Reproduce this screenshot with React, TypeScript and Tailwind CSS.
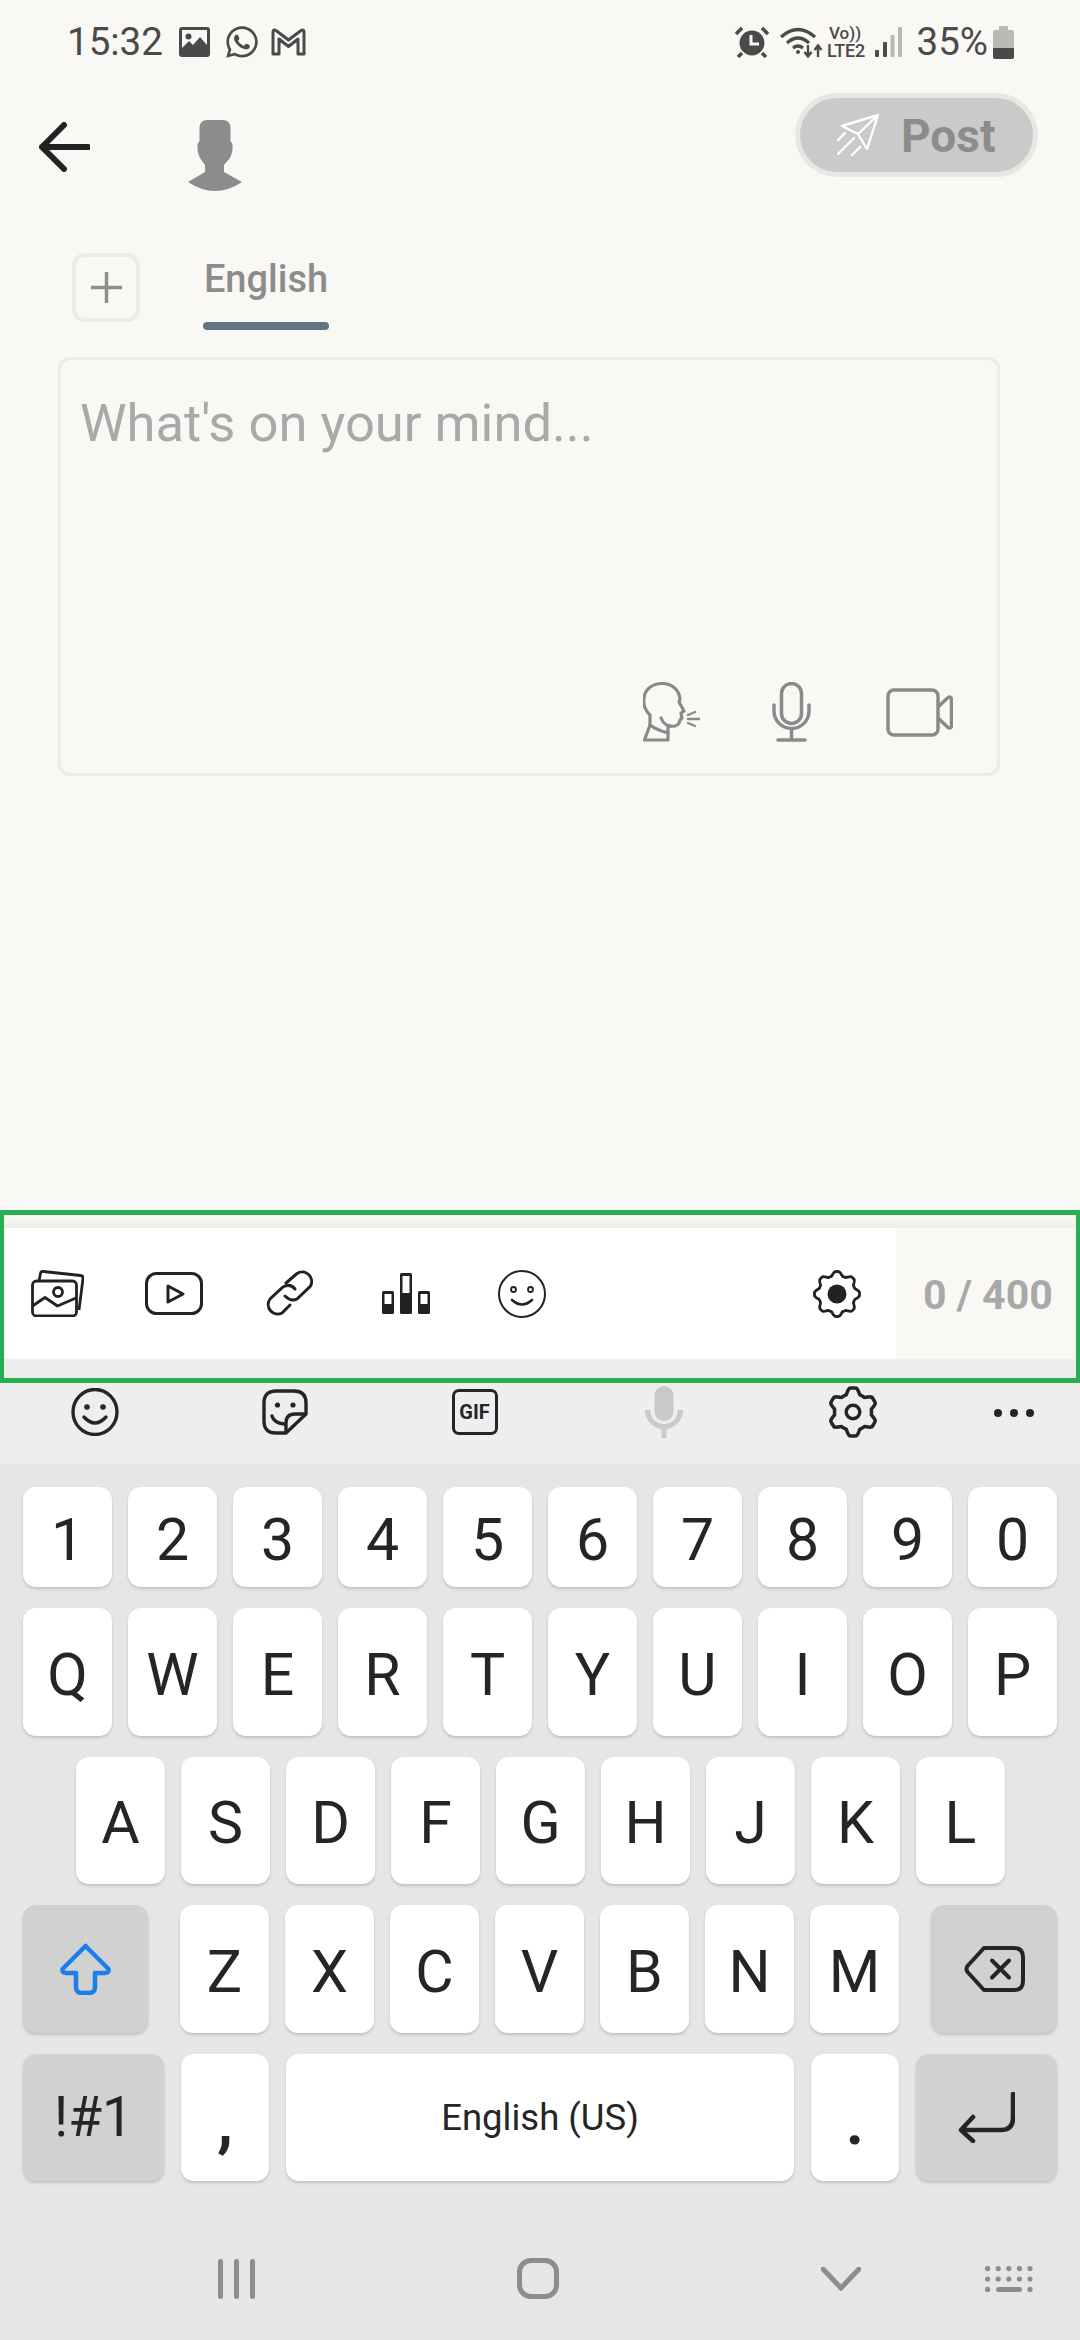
import { FaWhatsapp } from "react-icons/fa"

// lobed outline used by both settings cogs
const cogPath = (cx: number, cy: number, teeth: number, inner: number, outer: number, sharp: number) => {
  const pts: string[] = []
  for (let i = 0; i < 240; i++) {
    const a = (i / 240) * Math.PI * 2 - Math.PI / 2
    const w = Math.max(-1, Math.min(1, Math.cos(a * teeth + (Math.PI / 2) * teeth) * sharp))
    const r = (inner + outer) / 2 + ((outer - inner) / 2) * w
    pts.push(`${(cx + r * Math.cos(a)).toFixed(2)} ${(cy + r * Math.sin(a)).toFixed(2)}`)
  }
  return `M${pts.join("L")}Z`
}

const Key = ({ label, className = "w-[89px]" }: { label: string; className?: string }) => (
  <div className={`${className} flex items-center justify-center pt-1 rounded-[13px] bg-white text-[59px] leading-none text-[#252525] shadow-[0_2px_3px_rgba(0,0,0,0.16)]`}>
    {label}
  </div>
)

const FnKey = ({ className, children }: { className: string; children: React.ReactNode }) => (
  <div className={`${className} flex items-center justify-center rounded-[13px] bg-[#d1d1d1] text-[#252525] shadow-[0_2px_3px_rgba(0,0,0,0.16)]`}>
    {children}
  </div>
)

const StatusBar = () => (
  <div className="h-[84px] shrink-0 flex items-center justify-between pl-[67px] pr-[66px] text-[#4a4a4a]">
    <div className="flex items-center">
      <span className="text-[38.5px] leading-none pt-[1px]">15:32</span>
      <svg className="ml-[16px]" width="31" height="30" viewBox="0 0 31 30">
        <rect width="31" height="30" rx="3" fill="#4a4a4a" />
        <rect x="3" y="3" width="25" height="22" fill="#f9f8f4" />
        <circle cx="9.5" cy="9.5" r="3" fill="#4a4a4a" />
        <path d="M3 21 L10 14 L14 18 L21 10 L28 18 V26 H3 Z" fill="#4a4a4a" />
      </svg>
      <FaWhatsapp className="ml-[14px]" size={36} color="#4a4a4a" />
      <svg className="ml-[11px]" width="35" height="28" viewBox="0 0 35 28" fill="none" stroke="#4a4a4a" strokeWidth="3" strokeLinejoin="round">
        <path d="M2 26 V4 Q2 1 5 2.5 L17.5 12 L30 2.5 Q33 1 33 4 V26 H27 V11 L17.5 18.5 L8 11 V26 Z" />
      </svg>
    </div>
    <div className="flex items-center">
      <svg width="34" height="32" viewBox="0 0 34 32" fill="#4a4a4a">
        <circle cx="17" cy="17" r="12.5" />
        <path d="M16 9 V18 H24" fill="none" stroke="#f9f8f4" strokeWidth="3" />
        <path d="M1 8 L7 2 M33 8 L27 2 M3 31 L7 27 M31 31 L27 27" stroke="#4a4a4a" strokeWidth="3.5" fill="none" />
      </svg>
      <svg className="ml-[11px]" width="43" height="32" viewBox="0 0 43 32" fill="none" stroke="#4a4a4a" strokeWidth="3.2">
        <path d="M1 11 Q18 -4 35 11" />
        <path d="M7 17 Q18 7 29 17" />
        <path d="M13 22 Q18 18 23 22" />
        <circle cx="18" cy="26" r="2" fill="#4a4a4a" stroke="none" />
        <path d="M28 19 V30 M24.5 26 L28 30.5 L31.5 26 M38 31 V20 M34.5 24 L38 19.5 L41.5 24" strokeWidth="2.4" />
      </svg>
      <div className="ml-[3px] w-[41px] h-[32px] flex flex-col items-center justify-between font-medium leading-none">
        <span className="text-[17px] leading-[15px] pr-[2px]">Vo))</span>
        <span className="text-[18px] leading-[15px] tracking-[-0.2px]">LTE2</span>
      </div>
      <svg className="ml-[8px]" width="27" height="30" viewBox="0 0 27 30">
        <rect x="0" y="23" width="4" height="7" rx="1" fill="#4a4a4a" />
        <rect x="8" y="15" width="4" height="15" rx="1" fill="#4a4a4a" />
        <rect x="15.5" y="8" width="4" height="22" rx="1" fill="#b9b8b3" />
        <rect x="23" y="0" width="4" height="30" rx="1" fill="#b9b8b3" />
      </svg>
      <span className="ml-[15px] text-[38.5px] leading-none pt-[1px]">35%</span>
      <svg className="ml-[5px]" width="21" height="33" viewBox="0 0 21 33">
        <path d="M6 0 H15 V4 H19 Q21 4 21 6 V22 H0 V6 Q0 4 2 4 H6 Z" fill="#bab9b4" />
        <path d="M0 22 H21 V31 Q21 33 19 33 H2 Q0 33 0 31 Z" fill="#4a4a4a" />
      </svg>
    </div>
  </div>
)

const Header = () => (
  <div className="h-[131px] shrink-0 flex items-start pl-[39px] pr-[42px]">
    <svg className="mt-[38px]" width="51" height="50" viewBox="0 0 51 50" fill="none" stroke="#222" strokeWidth="6" strokeLinecap="round" strokeLinejoin="round">
      <path d="M49 25 H3 M25 3 L3 25 L25 47" />
    </svg>
    <svg className="ml-[98px] mt-[36px]" width="54" height="71" viewBox="0 0 54 71" fill="#8c8c8c">
      <path d="M19 0 H35 Q42 0 42.5 8 V21 L44.5 24 V30 Q43.5 35 42 38 L36 45 V52 L54 62 Q27 80 0 62 L17 52 V45 L12 38 Q10.5 35 9.5 30 V24 L11.5 21 V8 Q12 0 19 0 Z" />
    </svg>
    <div className="ml-auto mt-[9px] w-[243px] h-[84px] flex items-center rounded-full border-[5px] border-[#e8e8e3] bg-[#cacaca] pl-[37px]">
      <svg width="42" height="42" viewBox="0 0 42 42" fill="none" stroke="#fff" strokeWidth="2.4" strokeLinecap="round" strokeLinejoin="round">
        <path d="M41 1 L5 12 L21 20 L30 35 Z M21 20 L41 1" />
        <path d="M1 26 L8 19 M1 40 L17 24 M15 41 L23 33" />
      </svg>
      <span className="ml-[22px] pt-[2px] text-[46px] leading-none font-bold text-[#8c8c8c]">Post</span>
    </div>
  </div>
)

const Tabs = () => (
  <div className="h-[142px] shrink-0 flex items-start pl-[72px]">
    <div className="mt-[38px] w-[68px] h-[69px] flex items-center justify-center rounded-[13px] border-[4px] border-[#ebebe7]">
      <svg width="31" height="31" viewBox="0 0 31 31" stroke="#8e8e8e" strokeWidth="3.5">
        <path d="M15.5 0 V31 M0 15.5 H31" />
      </svg>
    </div>
    <div className="ml-[63px] mt-[38px] w-[126px] h-[77px] flex flex-col justify-between items-center">
      <span className="text-[38px] leading-[52px] font-medium text-[#8c8c8c]">English</span>
      <div className="w-full h-[8px] rounded-full bg-[#5f7582]" />
    </div>
  </div>
)

const Composer = () => (
  <div className="ml-[58px] w-[942px] h-[419px] shrink-0 flex flex-col justify-between rounded-[12px] border-[3px] border-[#ebebe7] pl-[19px] pr-[44px] pt-[32px] pb-[31px]">
    <div className="text-[52.5px] leading-[62px] text-[#a9a9a9]">What's on your mind...</div>
    <div className="flex items-center justify-end">
      <svg width="57" height="60" viewBox="0 0 57 60" fill="none" stroke="#8a8a8a" strokeWidth="3.2" strokeLinecap="round" strokeLinejoin="round">
        <path d="M1.5 58 L7 43 V33 C2 28 0 22 1 16 C2 6 11 1.5 19 1.5 C28 1.5 36 7 37 17 L36 20 L41 29 L38 31 L39 36 L37 38 C36 44 32 45 25 44 V58 Z" />
        <path d="M18 36 C20 41 24 44 28 44 M7 43 C12 47 18 49 25 51" />
        <path d="M45 33 L52 30 M45 37 L57 37 M45 41 L52 44" strokeWidth="2.4" />
      </svg>
      <svg className="ml-[72px]" width="39" height="60" viewBox="0 0 39 60" fill="none" stroke="#8a8a8a" strokeWidth="3.5" strokeLinecap="round">
        <rect x="9.5" y="1.5" width="20" height="40" rx="10" />
        <path d="M2 23 V29 A17.5 17.5 0 0 0 37 29 V23 M19.5 47 V58 M6 58 H33" />
      </svg>
      <svg className="ml-[75px]" width="67" height="49" viewBox="0 0 67 49" fill="none" stroke="#8a8a8a" strokeWidth="3.5" strokeLinejoin="round">
        <rect x="2" y="2" width="50" height="45" rx="6" />
        <path d="M52 19 L62 9.5 Q65.5 8 65.5 12 V37 Q65.5 41 62 39.5 L52 30" />
      </svg>
    </div>
  </div>
)

const MediaToolbar = () => (
  <div className="shrink-0">
    <div className="h-[13px] bg-gradient-to-b from-[#f9f8f4] to-[#eeeeea]" />
    <div className="h-[131px] flex">
      <div className="w-[896px] bg-white flex items-center pl-[31px] text-[#222]">
        <svg width="53" height="47" viewBox="0 0 53 47" fill="none" stroke="#222" strokeWidth="2.8" strokeLinejoin="round">
          <path d="M8 11 L9.5 3.5 Q10 1 12.5 1.5 L49.5 5.5 Q52.5 6 52 8.5 L48 40" />
          <rect x="1.5" y="11" width="44" height="35" rx="4" />
          <circle cx="27" cy="22" r="4.5" />
          <path d="M1.5 36 L14 27.5 L26.5 36 L45 28" />
        </svg>
        <svg className="ml-[61px]" width="58" height="43" viewBox="0 0 58 43" fill="none" stroke="#222" strokeWidth="3" strokeLinejoin="round">
          <rect x="1.5" y="1.5" width="55" height="40" rx="10" />
          <path d="M23 14 L38 22 L23 30 Z" />
        </svg>
        <svg className="ml-[63px]" width="47" height="47" viewBox="0 0 47 47" fill="none" stroke="#222" strokeWidth="3" strokeLinecap="round">
          <path d="M20 13 L31 3.5 A9.5 9.5 0 0 1 44.5 16 L31 29 Q25 32 19 26" />
          <path d="M29 19 Q24 13 17 17 L4 29 A9.5 9.5 0 0 0 16 43 L24 35" />
        </svg>
        <svg className="ml-[69px]" width="48" height="41" viewBox="0 0 48 41">
          <rect x="0" y="18" width="12" height="23" rx="1.5" fill="#222" />
          <rect x="2.5" y="21" width="7" height="10" fill="#fff" />
          <rect x="18" y="0" width="12" height="41" rx="1.5" fill="#222" />
          <rect x="20.5" y="3" width="7" height="17" fill="#fff" />
          <rect x="36" y="18" width="12" height="23" rx="1.5" fill="#222" />
          <rect x="38.5" y="21" width="7" height="10" fill="#fff" />
        </svg>
        <svg className="ml-[68px]" width="48" height="48" viewBox="0 0 48 48" fill="none" stroke="#222">
          <ellipse cx="24" cy="24" rx="23" ry="23" strokeWidth="2" />
          <circle cx="15.5" cy="19.5" r="2.5" strokeWidth="1.8" />
          <circle cx="32.5" cy="19.5" r="2.5" strokeWidth="1.8" />
          <path d="M14 30 Q24 39 34 30" strokeWidth="2.6" strokeLinecap="round" />
        </svg>
        <svg className="ml-[267px]" width="48" height="48" viewBox="0 0 48 48">
          <path d={cogPath(24, 24, 8, 18.5, 22.5, 1.3)} fill="none" stroke="#222" strokeWidth="2.8" />
          <circle cx="24" cy="24" r="9.5" fill="#222" />
        </svg>
      </div>
      <div className="flex-1 flex items-center pl-[27px] pt-[4px] text-[41px] leading-none font-bold text-[#a8a8a8]">0 / 400</div>
    </div>
  </div>
)

const KeyboardToolbar = () => (
  <div className="h-[105px] shrink-0 flex items-center bg-[#eeeeee]">
    <div className="w-[190px] flex justify-center">
      <svg width="48" height="48" viewBox="0 0 48 48" fill="none" stroke="#252525" strokeWidth="3.4">
        <ellipse cx="24" cy="24" rx="22" ry="22.5" />
        <circle cx="16" cy="19" r="2.8" fill="#252525" stroke="none" />
        <circle cx="32" cy="19" r="2.8" fill="#252525" stroke="none" />
        <path d="M13 29 Q24 41 35 29" strokeLinecap="round" />
      </svg>
    </div>
    <div className="w-[190px] flex justify-center">
      <svg width="46" height="46" viewBox="0 0 46 46" fill="none" stroke="#252525" strokeWidth="3.4" strokeLinejoin="round">
        <path d="M24 44 H14 Q2 44 2 32 V14 Q2 2 14 2 H32 Q44 2 44 14 V25 L24 44 Z" />
        <path d="M44 25 H33 Q24 25 24 34 V44" />
        <path d="M10 27 Q12 34 22 35" strokeLinecap="round" />
        <circle cx="15.5" cy="16" r="2.6" fill="#252525" stroke="none" />
        <circle cx="31" cy="16" r="2.6" fill="#252525" stroke="none" />
      </svg>
    </div>
    <div className="w-[189px] flex justify-center">
      <div className="w-[46px] h-[46px] flex items-center justify-center rounded-[7px] border-[3.5px] border-[#252525] text-[20px] leading-none font-bold text-[#252525]">GIF</div>
    </div>
    <div className="w-[189px] flex justify-center">
      <svg width="38" height="52" viewBox="0 0 38 52" fill="none" stroke="#c9c9c9" strokeWidth="5">
        <rect x="9.5" y="0" width="19" height="35" rx="9.5" fill="#c9c9c9" stroke="none" />
        <path d="M2.5 24 A16.5 16.5 0 0 0 35.5 24 M19 40 V52" />
      </svg>
    </div>
    <div className="w-[190px] flex justify-center">
      <svg width="50" height="52" viewBox="0 0 50 52">
        <path d={cogPath(25, 26, 6, 18.5, 24, 1.6)} fill="none" stroke="#252525" strokeWidth="3.5" strokeLinejoin="round" />
        <circle cx="25" cy="26" r="6.8" fill="none" stroke="#252525" strokeWidth="3.4" />
      </svg>
    </div>
    <div className="flex-1 flex justify-center gap-[8px] pt-[3px]">
      <div className="w-[8px] h-[8px] rounded-full bg-[#252525]" />
      <div className="w-[8px] h-[8px] rounded-full bg-[#252525]" />
      <div className="w-[8px] h-[8px] rounded-full bg-[#252525]" />
    </div>
  </div>
)

const Keyboard = () => (
  <div className="h-[876px] shrink-0 flex flex-col gap-[21px] bg-[#e6e6e6] pt-[23px]">
    <div className="h-[100px] flex gap-[16px] pl-[23px]">
      {"1234567890".split("").map((k) => <Key key={k} label={k} />)}
    </div>
    <div className="h-[128px] flex gap-[16px] pl-[23px]">
      {"QWERTYUIOP".split("").map((k) => <Key key={k} label={k} />)}
    </div>
    <div className="h-[127px] flex gap-[16px] pl-[76px]">
      {"ASDFGHJKL".split("").map((k) => <Key key={k} label={k} />)}
    </div>
    <div className="h-[128px] flex gap-[16px] pl-[23px]">
      <FnKey className="w-[125px] mr-[16px]">
        <svg width="51" height="52" viewBox="0 0 51 52" fill="none" stroke="#1a7fea" strokeWidth="4.5" strokeLinejoin="round">
          <path d="M25.5 3 L48.5 26 Q49 30 45 30 H35 V44 Q35 50 29 50 H22 Q16 50 16 44 V30 H6 Q2 30 2.5 26 Z" />
        </svg>
      </FnKey>
      {"ZXCVBNM".split("").map((k) => <Key key={k} label={k} />)}
      <FnKey className="w-[126px] ml-[16px]">
        <svg width="61" height="46" viewBox="0 0 61 46" fill="none" stroke="#252525" strokeWidth="4" strokeLinejoin="round" strokeLinecap="round">
          <path d="M20 2 H50 Q59 2 59 11 V35 Q59 44 50 44 H20 L3.5 26 Q1.5 23 3.5 20 Z" />
          <path d="M28 14.5 L45 31.5 M45 14.5 L28 31.5" />
        </svg>
      </FnKey>
    </div>
    <div className="h-[127px] flex gap-[17px] pl-[23px]">
      <FnKey className="w-[141px] text-[55px] leading-none">!#1</FnKey>
      <div className="w-[88px] flex justify-center rounded-[13px] bg-white text-[72px] leading-none font-medium text-[#252525] shadow-[0_2px_3px_rgba(0,0,0,0.16)] pt-[30px]">,</div>
      <div className="w-[508px] flex items-center justify-center pt-[2px] rounded-[13px] bg-white text-[36.5px] leading-none text-[#252525] shadow-[0_2px_3px_rgba(0,0,0,0.16)]">English (US)</div>
      <div className="w-[88px] flex justify-center rounded-[13px] bg-white text-[72px] leading-none font-medium text-[#252525] shadow-[0_2px_3px_rgba(0,0,0,0.16)] pt-[30px]">.</div>
      <FnKey className="w-[141px]">
        <svg width="57" height="51" viewBox="0 0 57 51" fill="none" stroke="#252525" strokeWidth="4.5" strokeLinecap="round" strokeLinejoin="round">
          <path d="M55 2 V26 Q55 38 43 38 H3 M15 25 L3 38 L15 49" />
        </svg>
      </FnKey>
    </div>
    <div className="h-[41px] mt-[56px] flex items-center pl-[218px] text-[#8d8d8d]">
      <div className="flex gap-[11px]">
        <div className="w-[5px] h-[40px] rounded-full bg-[#8d8d8d]" />
        <div className="w-[5px] h-[40px] rounded-full bg-[#8d8d8d]" />
        <div className="w-[5px] h-[40px] rounded-full bg-[#8d8d8d]" />
      </div>
      <div className="ml-[262px] w-[42px] h-[41px] rounded-[14px] border-[5px] border-[#8d8d8d]" />
      <svg className="ml-[262px]" width="40" height="24" viewBox="0 0 40 24" fill="none" stroke="#8d8d8d" strokeWidth="5" strokeLinecap="round">
        <path d="M2 2 L20 21 L38 2" />
      </svg>
      <svg className="ml-[124px]" width="48" height="26" viewBox="0 0 48 26" fill="#8d8d8d">
        {[0, 1].map((r) =>
          [0, 1, 2, 3, 4].map((c) => <circle key={`${r}-${c}`} cx={2.6 + c * 10.6} cy={2.6 + r * 10.4} r="2.6" />)
        )}
        <circle cx="2.6" cy="23.4" r="2.6" />
        <rect x="11" y="21" width="26" height="5" rx="2.5" />
        <circle cx="45" cy="23.4" r="2.6" />
      </svg>
    </div>
  </div>
)

export default function App() {
  return (
    <div className="relative w-[1080px] h-[2340px] overflow-hidden flex flex-col bg-[#f9f8f4] font-[Roboto,sans-serif]">
      <StatusBar />
      <Header />
      <Tabs />
      <Composer />
      <div className="flex-1" />
      <MediaToolbar />
      <KeyboardToolbar />
      <Keyboard />
      {/* green annotation frame over the toolbar */}
      <div className="absolute left-0 top-[1210px] w-[1080px] h-[173px] border-x-4 border-y-[5px] border-[#28ae53]" />
    </div>
  )
}
